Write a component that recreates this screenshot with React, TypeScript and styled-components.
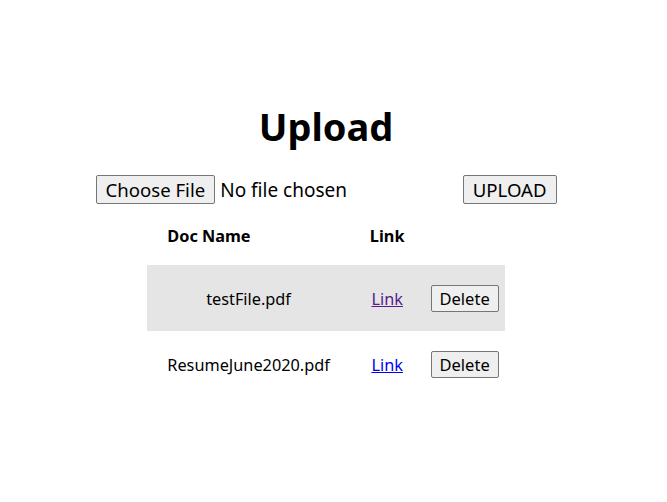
import React from "react";
import styled, { createGlobalStyle } from "styled-components";

const GlobalStyle = createGlobalStyle`
  html, body {
    margin: 0;
    padding: 0;
    background: #ffffff;
    font-family: "Noto Sans", "Open Sans", sans-serif;
    color: #000000;
  }
`;

const Page = styled.div`
  width: 652px;
  display: flex;
  flex-direction: column;
  align-items: center;
  padding-top: 98px;
`;

const Title = styled.h1`
  margin: 0;
  font-size: 38px;
  font-weight: 700;
  line-height: 56px;
`;

const UploadRow = styled.form`
  width: 461px;
  margin-top: 21px;
  display: flex;
  align-items: center;
  justify-content: space-between;
`;

const FilePicker = styled.div`
  display: flex;
  align-items: center;
  gap: 5px;
`;

const NativeButton = styled.button<{ $small?: boolean }>`
  font-family: inherit;
  font-size: ${(p) => (p.$small ? "16.5px" : "18.6px")};
  line-height: 25px;
  color: #000;
  background: #efefef;
  border: 1px solid #767676;
  border-radius: 2px;
  padding: ${(p) => (p.$small ? "0 8px" : "1px 9px")};
  cursor: pointer;
`;

const FileLabel = styled.span`
  font-size: 19px;
`;

const Table = styled.table`
  margin-top: 11px;
  border-collapse: collapse;
  font-size: 16.3px;
`;

const HeadCell = styled.th`
  text-align: left;
  font-weight: 700;
  padding: 10px 20px 18px;
`;

const Row = styled.tr<{ $shaded?: boolean }>`
  background: ${(p) => (p.$shaded ? "#e5e5e5" : "transparent")};
`;

const Cell = styled.td<{ $tight?: boolean }>`
  text-align: center;
  padding: ${(p) => (p.$tight ? "20px 6px 19px" : "20px 20px 19px")};
`;

const DocLink = styled.a<{ $visited?: boolean }>`
  color: ${(p) => (p.$visited ? "#551a8b" : "#0000ee")};
  text-decoration: underline;
`;

const docs = [
  { name: "testFile.pdf", visited: true },
  { name: "ResumeJune2020.pdf", visited: false },
];

export default function App() {
  return (
    <>
      <GlobalStyle />
      <Page>
        <Title>Upload</Title>
        <UploadRow onSubmit={(e) => e.preventDefault()}>
          <FilePicker>
            <NativeButton type="button">Choose File</NativeButton>
            <FileLabel>No file chosen</FileLabel>
          </FilePicker>
          <NativeButton type="submit">UPLOAD</NativeButton>
        </UploadRow>
        <Table>
          <thead>
            <tr>
              <HeadCell>Doc Name</HeadCell>
              <HeadCell>Link</HeadCell>
              <HeadCell />
            </tr>
          </thead>
          <tbody>
            {docs.map((d, i) => (
              <Row key={d.name} $shaded={i === 0}>
                <Cell>{d.name}</Cell>
                <Cell>
                  <DocLink href="#" $visited={d.visited}>
                    Link
                  </DocLink>
                </Cell>
                <Cell $tight>
                  <NativeButton type="button" $small>
                    Delete
                  </NativeButton>
                </Cell>
              </Row>
            ))}
          </tbody>
        </Table>
      </Page>
    </>
  );
}
